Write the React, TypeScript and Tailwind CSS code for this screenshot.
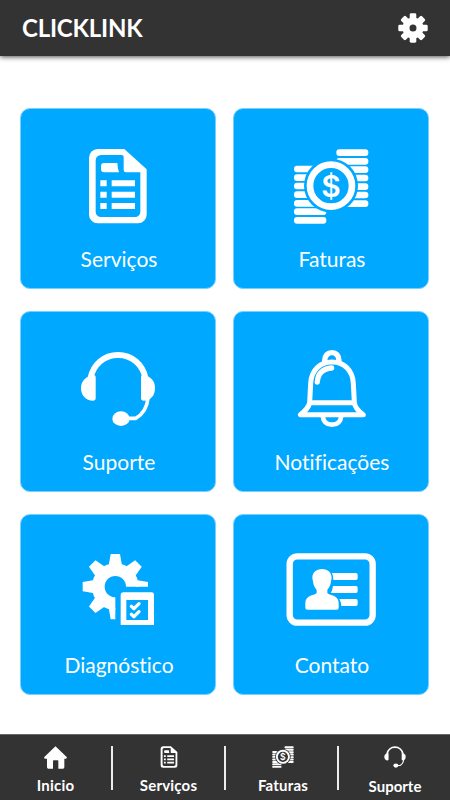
import type { ReactNode } from "react";

interface IconProps {
  viewBox: string;
  className?: string;
}

function DocumentIcon({ viewBox, className }: IconProps) {
  return (
    <svg viewBox={viewBox} className={className} fill="currentColor">
      <path
        fillRule="evenodd"
        d="M68 27H148L215 88V224a26 26 0 0 1-26 26H68a26 26 0 0 1-26-26V53a26 26 0 0 1 26-26zM78 45a16 16 0 0 0-16 16V215a16 16 0 0 0 16 16H180a16 16 0 0 0 16-16V97H153q-7 0-7-7V51q0-6-6-6z"
      />
      <path d="M87 69H127q1 18 5 28H87q-9 0-9-9V78q0-9 9-9z" />
      <path d="M76 121h19v18h-19zM110 121h70v18h-70zM76 155h19v18h-19zM110 155h70v18h-70zM76 189h19v18h-19zM110 189h70v18h-70z" />
    </svg>
  );
}

const RIGHT_COINS = [28, 54, 79, 104, 130, 155, 181];
const LEFT_COINS = [77, 103, 128, 154, 180, 205, 231];

function CoinsIcon({ viewBox, className, disc }: IconProps & { disc: string }) {
  return (
    <svg viewBox={viewBox} className={className} fill="currentColor">
      {RIGHT_COINS.map((y) => (
        <rect key={y} x="154" y={y} width="96" height="20" rx="9" />
      ))}
      {LEFT_COINS.map((y) => (
        <rect key={y} x="27" y={y} width="97" height="20" rx="9" />
      ))}
      <circle cx="138" cy="137" r="81" fill={disc} />
      <circle cx="138" cy="137" r="63" fill="none" stroke="currentColor" strokeWidth="20" />
      <text x="138" y="170" textAnchor="middle" fontSize="90" fontWeight="600" fontFamily="Inter, sans-serif">
        $
      </text>
    </svg>
  );
}

function HeadsetIcon({ viewBox, className }: IconProps) {
  return (
    <svg viewBox={viewBox} className={className} fill="currentColor">
      <path d="M47 98C55 60 86 30 129 30S203 60 211 98" fill="none" stroke="currentColor" strokeWidth="18" />
      <path d="M54 90q8 0 8 7v62q0 8-8 8C32 167 18 151 18 129S34 94 54 90z" />
      <path d="M206 90q-8 0-8 7v62q0 8 8 8C228 167 240 151 240 129S226 94 206 90z" />
      <path d="M219 160C216 187 202 209 182 220H155" fill="none" stroke="currentColor" strokeWidth="11" />
      <ellipse cx="138" cy="221" rx="26" ry="22" />
    </svg>
  );
}

function BellIcon({ viewBox, className }: IconProps) {
  return (
    <svg viewBox={viewBox} className={className} fill="none" stroke="currentColor"
      strokeWidth="15" strokeLinecap="round" strokeLinejoin="round">
      <path d="M46 209H235C220 198 209 188 208 172L205 115C203 75 176 51 141 51S79 75 77 115L74 172C72 188 60 198 46 209z" />
      <path d="M76 173H206" />
      <path d="M113 212C115 230 126 239 141 239S167 230 169 212" strokeWidth="14" />
      <path d="M119 47C120 31 128 23 141 23S161 31 162 47" strokeWidth="16" />
      <path d="M97 111C98 87 113 71 140 69" strokeWidth="16" />
    </svg>
  );
}

const TEETH = [0, 45, 90, 135, 180, 225, 270, 315];

function GearChecklistIcon({ viewBox, className }: IconProps) {
  return (
    <svg viewBox={viewBox} className={className} fill="currentColor">
      <clipPath id="gear-cut">
        <path d="M0 0H270V125H121V270H0z" />
      </clipPath>
      <g clipPath="url(#gear-cut)">
        <circle cx="121" cy="125" r="51" fill="none" stroke="currentColor" strokeWidth="38" />
        {TEETH.map((angle) => (
          <path key={angle} d="M107 27H135L141 62H101z" transform={`rotate(${angle} 121 125)`} />
        ))}
      </g>
      <path
        fillRule="evenodd"
        d="M145 142H230q7 0 7 7V240H137V150q0-8 8-8zM154 165V225H219V165z"
      />
      <path d="M169 184l8 7 15-15M169 208l8 7 15-15" fill="none" stroke="currentColor"
        strokeWidth="10" strokeLinecap="round" strokeLinejoin="round" />
    </svg>
  );
}

function ContactIcon({ viewBox, className }: IconProps) {
  return (
    <svg viewBox={viewBox} className={className} fill="currentColor">
      <rect x="29" y="34" width="249" height="199" rx="23" fill="none" stroke="currentColor" strokeWidth="19" />
      <path d="M126 72C144 72 155 84 155 98Q155 104 153 108C152 124 144 131 142 135V144C146 151 176 150 176 173V188q0 6-6 6H82q-6 0-6-6V173C76 150 106 151 110 144V135C108 131 100 124 99 108Q97 104 97 98C97 84 108 72 126 72z" />
      <path d="M156 84H228q5 0 5 5v11q0 5-5 5H160q0-12-4-21zM159 123H228q5 0 5 5v11q0 5-5 5H153q0-5 3-7zM178 162H228q5 0 5 5v11q0 5-5 5H184q0-12-6-21z" />
    </svg>
  );
}

function HomeIcon() {
  return (
    <svg viewBox="134 63 69 69" className="size-[23px]" fill="currentColor">
      <path d="M168.500 64L202 96q2 4-2 5H195V127q0 4-4 4H177V108q0-2-2-2H163q-2 0-2 2V131H147q-4 0-4-4V101H137q-4-1-2-5z" />
    </svg>
  );
}

function SettingsIcon() {
  return (
    <svg viewBox="-15 -15 30 30" className="size-[30px]" fill="currentColor">
      <circle r="7" fill="none" stroke="currentColor" strokeWidth="7" />
      {TEETH.map((angle) => (
        <rect key={angle} x="-3.300" y="-14.700" width="6.600" height="7" rx="1.400" transform={`rotate(${angle})`} />
      ))}
    </svg>
  );
}

function Tile({ label, children }: { label: string; children: ReactNode }) {
  return (
    <button className="flex h-[181px] flex-col items-center rounded-[10px] border border-[#78d0ff] bg-[#00a8ff] pt-[31px] text-white">
      {children}
      <span className="mt-[15px] pl-0.5 text-[21px] leading-7">{label}</span>
    </button>
  );
}

function NavItem({ label, labelClass, children }: { label: string; labelClass: string; children: ReactNode }) {
  return (
    <button className="flex flex-1 flex-col items-center pt-[11px]">
      {children}
      <span className={`text-[15px] font-bold leading-5 ${labelClass}`}>{label}</span>
    </button>
  );
}

function Divider() {
  return <div className="mt-[11px] h-[44px] w-[2px] bg-[#ececec]" />;
}

export default function App() {
  return (
    <div className="flex h-[800px] w-[450px] flex-col overflow-hidden bg-white font-['Lato',sans-serif] [font-variant-ligatures:none]">
      <header className="flex h-14 shrink-0 items-center justify-between bg-[#333333] px-[22px] text-white shadow-[0_1px_5px_rgba(0,0,0,0.7)]">
        <h1 className="text-[24px] font-bold leading-none tracking-[-0.2px]">CLICKLINK</h1>
        <SettingsIcon />
      </header>

      <main className="grid flex-1 grid-cols-[196px_196px] content-start gap-x-[17px] gap-y-[22px] pl-5 pt-[52px]">
        <Tile label="Serviços">
          <DocumentIcon viewBox="-6 0 270 270" className="size-[90px]" />
        </Tile>
        <Tile label="Faturas">
          <CoinsIcon viewBox="3 0 270 270" className="size-[90px]" disc="#00a8ff" />
        </Tile>
        <Tile label="Suporte">
          <HeadsetIcon viewBox="-6 -6 270 270" className="size-[90px]" />
        </Tile>
        <Tile label="Notificações">
          <BellIcon viewBox="3 -6 270 270" className="size-[90px]" />
        </Tile>
        <Tile label="Diagnóstico">
          <GearChecklistIcon viewBox="-6 3 270 270" className="size-[90px]" />
        </Tile>
        <Tile label="Contato">
          <ContactIcon viewBox="18 3 270 270" className="size-[90px]" />
        </Tile>
      </main>

      <nav className="flex h-[66px] shrink-0 border-t border-[#666666] bg-[#333333] text-white">
        <NavItem label="Inicio" labelClass="mt-[6px] tracking-[0.200px]">
          <HomeIcon />
        </NavItem>
        <Divider />
        <NavItem label="Serviços" labelClass="mt-[6px] tracking-[0.200px]">
          <DocumentIcon viewBox="38 25 181 228" className="h-[22px] w-[18px]" />
          <span className="h-px" />
        </NavItem>
        <Divider />
        <NavItem label="Faturas" labelClass="mt-[6px] pl-[3px] tracking-[0.200px]">
          <CoinsIcon viewBox="25 25 228 228" className="ml-[3px] size-[22px]" disc="#333333" />
          <span className="h-px" />
        </NavItem>
        <Divider />
        <NavItem label="Suporte" labelClass="mt-[7px] pl-px">
          <HeadsetIcon viewBox="15 18 228 228" className="ml-px size-[22px]" />
          <span className="h-px" />
        </NavItem>
      </nav>
    </div>
  );
}
